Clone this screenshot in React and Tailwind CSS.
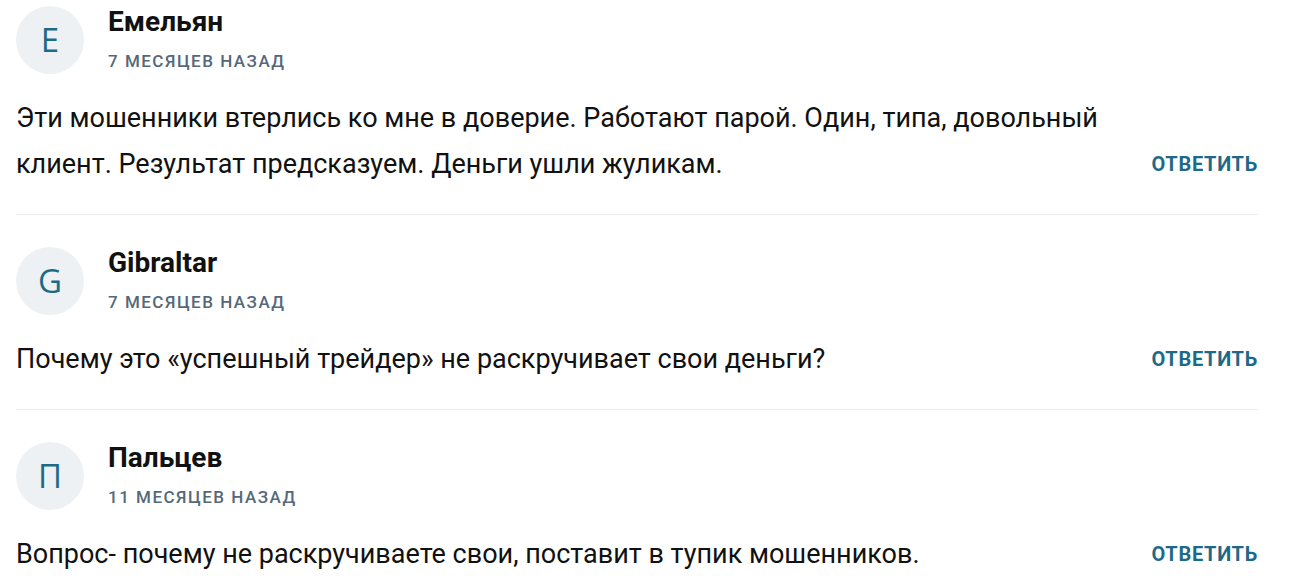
import React from 'react';

const comments = [
  {
    letter: 'Е',
    name: 'Емельян',
    date: '7 месяцев назад',
    text: 'Эти мошенники втерлись ко мне в доверие. Работают парой. Один, типа, довольный клиент. Результат предсказуем. Деньги ушли жуликам.',
  },
  {
    letter: 'G',
    name: 'Gibraltar',
    date: '7 месяцев назад',
    text: 'Почему это «успешный трейдер» не раскручивает свои деньги?',
  },
  {
    letter: 'П',
    name: 'Пальцев',
    date: '11 месяцев назад',
    text: 'Вопрос- почему не раскручиваете свои, поставит в тупик мошенников.',
  },
];

function Comment({ c, first }) {
  return (
    <div className={first ? 'pt-[6px] pb-[27px]' : 'pt-8 pb-[27px] border-t border-[#ececec]'}>
      <div className="flex items-center">
        <div className="w-[68px] h-[68px] rounded-full bg-[#edf1f4] flex items-center justify-center text-[33px] font-medium text-[#1e6b86] font-['Open_Sans',sans-serif]">
          {c.letter}
        </div>
        <div className="ml-[24px] -mt-[3px]">
          <div className="text-[28px] leading-[32px] font-bold text-[#111]">{c.name}</div>
          <div className="mt-[13px] text-[17px] leading-[20px] font-medium uppercase tracking-[1.5px] text-[#55687a]">{c.date}</div>
        </div>
      </div>
      <div className="mt-[21px] flex items-end justify-between">
        <p className="text-[27px] leading-[46px] text-[#111] max-w-[1100px]">{c.text}</p>
        <button className="text-[20px] leading-[46px] font-bold uppercase tracking-[0.7px] text-[#1d6a88] shrink-0">
          Ответить
        </button>
      </div>
    </div>
  );
}

export default function App() {
  return (
    <div className="bg-white min-h-screen font-['Roboto',sans-serif] overflow-hidden">
      <div className="pl-4 w-[1258px]">
        {comments.map((c, i) => (
          <Comment key={i} c={c} first={i === 0} />
        ))}
      </div>
    </div>
  );
}
